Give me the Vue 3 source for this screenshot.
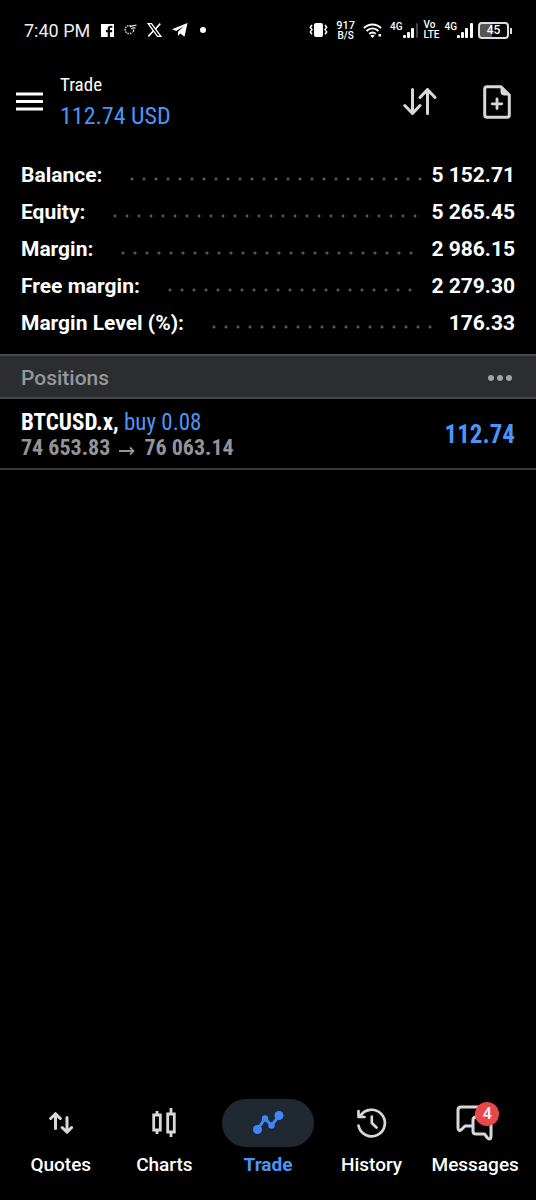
<script setup>
const account = [
  { label: 'Balance:', value: '5 152.71' },
  { label: 'Equity:', value: '5 265.45' },
  { label: 'Margin:', value: '2 986.15' },
  { label: 'Free margin:', value: '2 279.30' },
  { label: 'Margin Level (%):', value: '176.33' },
]
const tabs = [
  { id: 'quotes', label: 'Quotes' },
  { id: 'charts', label: 'Charts' },
  { id: 'trade', label: 'Trade', active: true },
  { id: 'history', label: 'History' },
  { id: 'messages', label: 'Messages', badge: 4 },
]
</script>

<template>
  <div class="app">
    <div class="status">
      <div class="status-left">
        <span class="time">7:40 PM</span>
        <svg width="13" height="13" viewBox="0 0 13 13"><path fill="#fff" fill-rule="evenodd" d="M0 0H13V13H9V8.2H11L11.3 6H9V4.8C9 4.1 9.300 3.800 10 3.800H11.400V1.800H9.600C7.700 1.800 6.700 2.900 6.700 4.600V6H5V8.200H6.700V13H0Z" /></svg>
        <svg width="13" height="12" viewBox="0 0 13 12" fill="none" stroke="#ddd"><path stroke-width="1.500" stroke-dasharray="1.500 1" d="M7 2C3 1 1 3 1.200 6C1.500 9 5 11 8.500 8.500" /><path stroke-width="1.300" d="M6 3C8 1 10 1.500 12.500 1.200M7.500 5C9 3.500 10 4.200 11.500 3.800M9.500 5.500V8" /></svg>
        <svg width="15" height="14" viewBox="0 0 15 14" fill="none" stroke="#fff"><path stroke-width="1.300" d="M1.200 .7H4.500L13.800 13.300H10.500Z" /><path stroke-width="1.600" d="M13.300 .6L8.500 6M6.300 8L1.300 13.400" /></svg>
        <svg width="16" height="14" viewBox="0 0 16 14"><path fill="#fff" d="M15.500 0L0 6.200L4.300 8L12 3L6 8.800V13L8.300 10.500L12.500 13.800Z" /></svg>
        <svg class="more-dot" width="6" height="6" viewBox="0 0 6 6"><circle cx="3" cy="3" r="3" fill="#fff" /></svg>
      </div>
      <div class="status-right">
        <svg class="spaced" width="19" height="16" viewBox="0 0 19 16"><rect x="5" y="1" width="9" height="14" rx="2" fill="#fff" /><path fill="none" stroke="#fff" stroke-width="1.500" d="M3 3L1.300 5.300L3 7.600L1.300 9.900L3 12.200M16 3L17.700 5.300L16 7.600L17.700 9.900L16 12.200" /></svg>
        <span class="stack spaced"><b>917</b><span>B/S</span></span>
        <svg class="spaced" width="19" height="15" viewBox="0 0 19 15" fill="none" stroke="#fff" stroke-width="2"><path d="M1 5C6 .2 13 .2 18 5M3.500 8C7.200 4.600 11.800 4.600 15.500 8M6.200 10.800C8.200 9.200 10.800 9.200 12.800 10.800" /><path fill="#fff" stroke="none" d="M7.300 12.500Q9.500 11 11.700 12.500L9.500 15ZM15.500 11H18V13.500H15.500Z" /></svg>
        <span class="cell"><span class="gen">4G</span><svg width="16" height="16" viewBox="0 0 16 16" fill="#fff"><rect y="13" width="3" height="3" rx="1" /><rect x="4" y="10" width="3" height="6" rx="1" /><rect x="8" y="6" width="3" height="10" rx="1" /><rect x="13" y="1" width="2" height="15" rx="1" fill="#444" /></svg></span>
        <span class="stack lte"><b>Vo</b><b>LTE</b></span>
        <span class="cell"><span class="gen">4G</span><svg width="16" height="16" viewBox="0 0 16 16" fill="#fff"><rect y="13" width="3" height="3" rx="1" /><rect x="4" y="10" width="3" height="6" rx="1" /><rect x="8" y="6" width="3" height="10" rx="1" /><rect x="13" y="1" width="3" height="15" rx="1" /></svg></span>
        <span class="battery"><span>45</span></span>
      </div>
    </div>

    <header class="header">
      <button class="icon-btn" aria-label="Menu">
        <svg width="28" height="20" viewBox="0 0 28 20" stroke="#fff" stroke-width="3"><path d="M0 2H27M0 9.500H27M0 17H27" /></svg>
      </button>
      <div class="heading">
        <h1>Trade</h1>
        <div class="total">112.74 USD</div>
      </div>
      <button class="icon-btn" aria-label="Sort">
        <svg width="34" height="28" viewBox="0 0 34 28" fill="none" stroke="#d8d8d8" stroke-width="3" stroke-linecap="round" stroke-linejoin="round"><path d="M9.500 1.500V25.500M1.800 17.500L9.500 25.500L17 17.500M24.500 25.500V1.500M17 9.500L24.500 1.500L32 9.500" /></svg>
      </button>
      <button class="icon-btn new" aria-label="New order">
        <svg width="28" height="34" viewBox="0 0 28 34" fill="none" stroke="#d8d8d8" stroke-width="3" stroke-linejoin="round" stroke-linecap="round"><path d="M18 1.700H4Q1.700 1.700 1.700 4V30Q1.700 32.300 4 32.300H24Q26.300 32.300 26.300 30V10Z" /><path fill="#d8d8d8" stroke-width="1" d="M18 1.500V7Q18 10 21 10H26.500Z" /><path stroke-width="2.800" d="M14 14V23.500M9.200 18.800H18.800" /></svg>
      </button>
    </header>

    <main>
      <dl class="account">
        <div v-for="row in account" :key="row.label" class="account-row">
          <dt>{{ row.label }}</dt>
          <span class="leader" aria-hidden="true"><span class="dots"></span></span>
          <dd>{{ row.value }}</dd>
        </div>
      </dl>

      <div class="section">
        <h2>Positions</h2>
        <button class="icon-btn" aria-label="More">
          <svg width="24" height="6" viewBox="0 0 24 6" fill="#a2a3a8"><circle cx="3" cy="3" r="3" /><circle cx="12" cy="3" r="3" /><circle cx="21" cy="3" r="3" /></svg>
        </button>
      </div>

      <article class="position">
        <div>
          <div class="deal"><b>BTCUSD.x,</b> <span>buy 0.08</span></div>
          <div class="prices">74 653.83 <svg width="16" height="10" viewBox="0 0 16 10" fill="none" stroke="#929499" stroke-width="1.800"><path d="M0 6H14.500M11 2.500L14.500 6L11 9.500" /></svg> 76 063.14</div>
        </div>
        <div class="profit">112.74</div>
      </article>
    </main>

    <nav class="tabs">
      <button v-for="tab in tabs" :key="tab.id" class="tab" :class="{ active: tab.active }">
        <span class="pill">
          <svg v-if="tab.id === 'quotes'" width="24" height="22" viewBox="0 0 24 22" fill="none" stroke="#d8d8d8" stroke-width="3" stroke-linecap="round" stroke-linejoin="round"><path d="M6.500 16.500V2M1.700 6.500L6.500 1.700L11.300 6.500M18 5.500V20M13.200 15.500L18 20.300L22.600 15.500" /></svg>
          <svg v-else-if="tab.id === 'charts'" width="24" height="30" viewBox="0 0 24 30" fill="none" stroke="#d8d8d8" stroke-width="2.800"><path d="M5 3V7M5 22V26M19 0V6M19 24V29M1.700 7H8.300V22H1.700ZM15.700 6H22.300V24H15.700Z" /></svg>
          <svg v-else-if="tab.id === 'trade'" width="32" height="24" viewBox="0 0 32 24" fill="#3f86fb" stroke="#3f86fb"><path fill="none" stroke-width="3" d="M5.500 18.500L13 7.500L19.500 14.500L27 5" /><g stroke="none"><circle cx="5.500" cy="18.500" r="4.500" /><circle cx="13" cy="7.500" r="3.200" /><circle cx="19.500" cy="14.500" r="3.200" /><circle cx="27" cy="4.500" r="4.500" /></g></svg>
          <svg v-else-if="tab.id === 'history'" width="32" height="32" viewBox="0 0 32 32" fill="none" stroke="#d8d8d8" stroke-width="2.700" stroke-linecap="round" stroke-linejoin="round"><path d="M2.500 18.500A13.300 13.300 0 1 0 4 9.500M2.500 4V10H8.500M15.800 9.500V16L20.500 20.500" /></svg>
          <svg v-else width="38" height="36" viewBox="0 0 38 36" fill="none" stroke="#d8d8d8" stroke-width="3" stroke-linecap="round" stroke-linejoin="round"><path d="M27 7V4.500Q27 2 24 2H5Q2 2 2 5V22.500Q2 27 5.500 24.500L9 21H17M20 12H32Q35 12 35 15V31Q35 35.500 31.500 33L28.500 29H20Q17 29 17 26V15Q17 12 20 12Z" /></svg>
          <span v-if="tab.badge" class="badge">{{ tab.badge }}</span>
        </span>
        <span class="tab-label">{{ tab.label }}</span>
      </button>
    </nav>
  </div>
</template>

<style>
body { background: #000; }
</style>

<style scoped>
.app {
  min-height: 100vh;
  display: flex;
  flex-direction: column;
  background: #000;
  color: #fff;
  font-family: Roboto, sans-serif;
}
svg { display: block; flex: none; }
h1, h2, dl, dt, dd { margin: 0; }
button { padding: 0; border: 0; background: none; color: inherit; font: inherit; cursor: pointer; }

.status { height: 60px; display: flex; align-items: center; justify-content: space-between; padding: 0 27px 0 24px; }
.status-left { display: flex; align-items: center; gap: 10px; color: #eee; }
.time { font-size: 18px; }
.status-left .time { margin-right: 1px; }
.more-dot { margin-left: 2px; }
.status-right { display: flex; align-items: center; gap: 5px; }
.status-right .spaced { margin-right: 3px; }
.stack { display: flex; flex-direction: column; align-items: center; font-size: 10px; line-height: 9px; font-weight: 500; }
.stack b { font-size: 11px; line-height: 10px; font-weight: 500; }
.lte { align-items: flex-start; }
.lte b { font-size: 10px; }
.cell { display: flex; align-items: center; }
.gen { align-self: flex-start; font-size: 10px; line-height: 10px; font-weight: 500; }
.battery {
  position: relative;
  box-sizing: border-box;
  width: 31px;
  height: 17px;
  border: 2px solid #ddd;
  border-radius: 4px;
  background: linear-gradient(90deg, #555 45%, transparent 45%);
  font-size: 12px;
  line-height: 13px;
  font-weight: 500;
  text-align: center;
}
.battery::after { content: ''; position: absolute; right: -5px; top: 4px; width: 2px; height: 6px; background: #ddd; }

.header { display: flex; align-items: center; height: 83px; padding: 0 25px 0 16px; }
.heading { flex: 1; margin-left: 16px; padding-top: 2px; }
.heading, .position { font-family: "Roboto Condensed", "Liberation Sans Narrow", Roboto, sans-serif; }
h1 { font-size: 19px; line-height: 26px; font-weight: 400; }
.total { font-size: 24px; line-height: 36px; color: #4a96f8; }
.new { margin-left: 46px; }

.account { padding: 13px 21px; font-size: 21px; font-weight: 700; }
.account-row { display: flex; height: 37px; align-items: center; }
.leader { flex: 1; margin: 0 4px 0 24px; }
.dots {
  display: block;
  width: round(down, 100%, 12px);
  height: 4px;
  margin-top: 8px;
  background: radial-gradient(circle, #55555a 1px, transparent 2px) 0 0 / 12px 4px;
}

.section {
  display: flex;
  align-items: center;
  justify-content: space-between;
  height: 39px;
  padding: 2px 24px 0 21px;
  background: #2c2d2f;
  border: solid #47484a;
  border-width: 2px 0;
}
h2 { font-size: 21px; font-weight: 500; color: #94979e; }

.position {
  display: flex;
  align-items: center;
  justify-content: space-between;
  height: 67px;
  padding: 2px 21px 0;
  border-bottom: 2px solid #38393b;
}
.deal { font-size: 23px; line-height: 26px; }
.deal span, .profit { color: #4a96f8; }
.prices { font-size: 22px; line-height: 24px; font-weight: 700; color: #929499; }
.prices svg { display: inline-block; margin: 0 4px; }
.profit { font-size: 25px; font-weight: 700; }

.tabs { display: grid; grid-template-columns: repeat(5, 1fr); margin-top: auto; padding: 0 9px 23px; }
.tab { display: flex; flex-direction: column; align-items: center; gap: 6px; }
.pill { position: relative; display: flex; align-items: center; justify-content: center; width: 92px; height: 48px; border-radius: 24px; }
.active .pill { background: #202832; }
.active { color: #4a96f8; }
.tab-label { font-size: 19px; line-height: 24px; font-weight: 500; }
.active .tab-label { font-weight: 700; }
.badge {
  position: absolute;
  left: 46px;
  top: 3px;
  width: 24px;
  height: 24px;
  border-radius: 50%;
  background: #e9484b;
  color: #fff;
  font-size: 16px;
  line-height: 24px;
  font-weight: 500;
  text-align: center;
}
</style>
